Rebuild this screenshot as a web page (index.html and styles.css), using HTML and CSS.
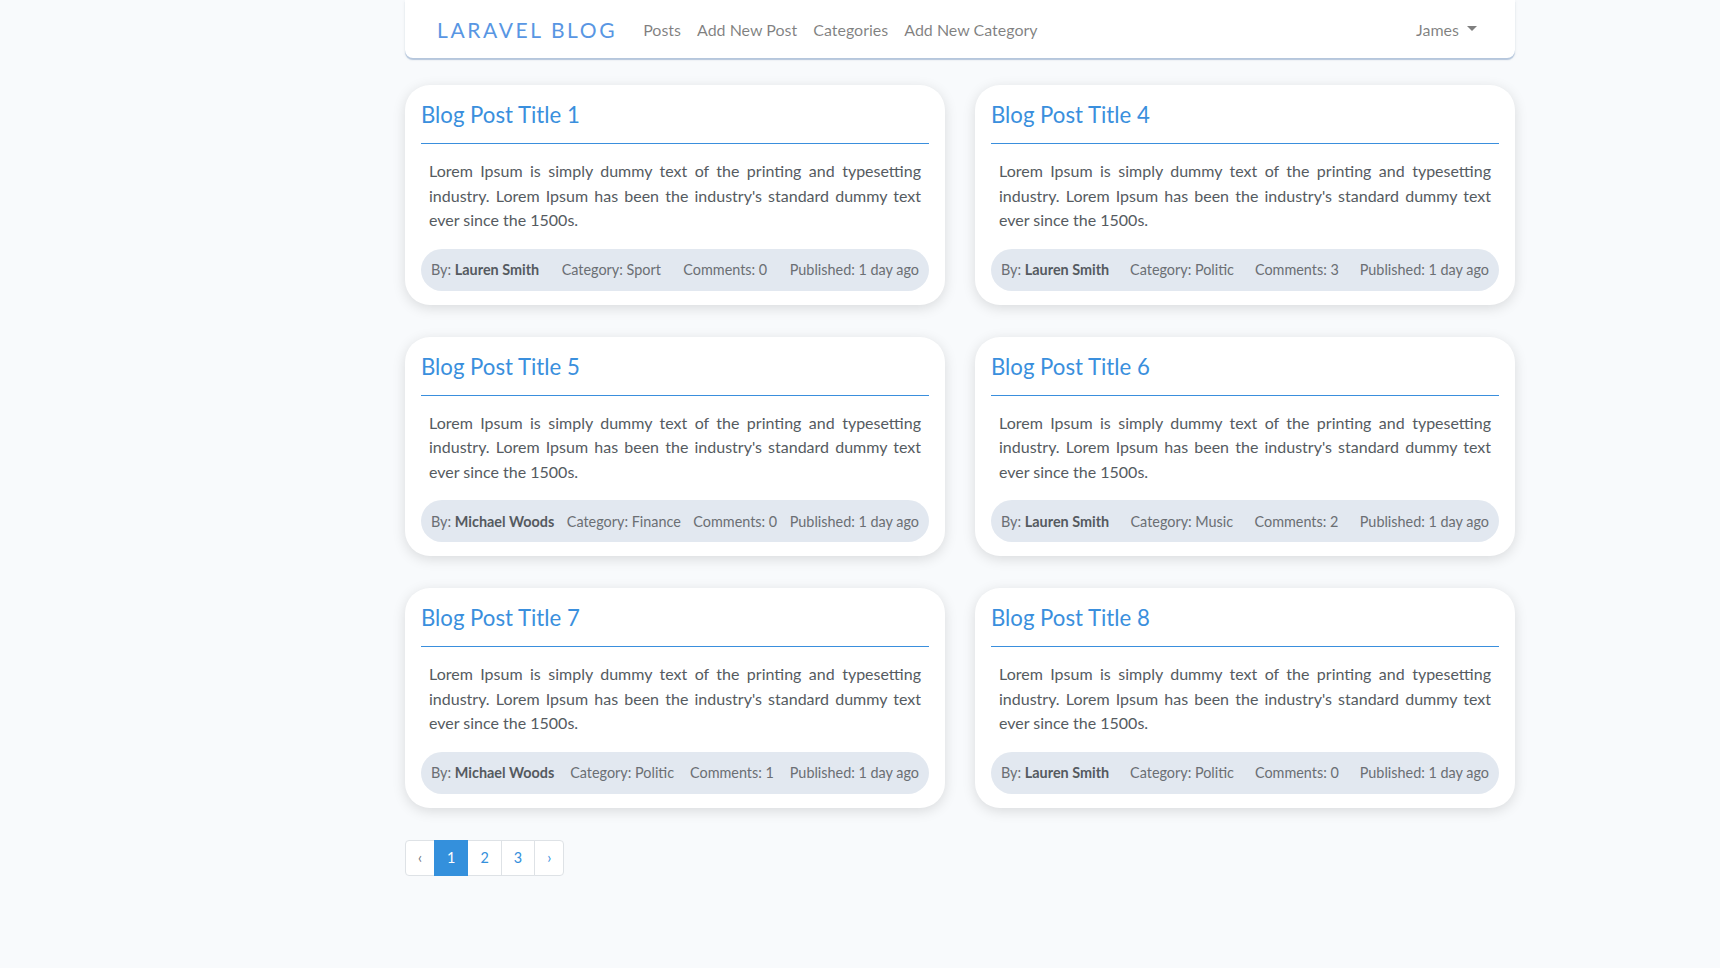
FILE: index.html
```html
<!DOCTYPE html>
<html lang="en">
<head>
<meta charset="utf-8">
<title>Laravel Blog</title>
<link rel="stylesheet" href="styles.css">
</head>
<body>
<div class="container">
  <nav class="navbar">
    <a class="brand" href="#">LARAVEL BLOG</a>
    <ul class="nav">
      <li><a class="nav-link" href="#">Posts</a></li>
      <li><a class="nav-link" href="#">Add New Post</a></li>
      <li><a class="nav-link" href="#">Categories</a></li>
      <li><a class="nav-link" href="#">Add New Category</a></li>
    </ul>
    <div class="nav-right">
      <a class="nav-link dropdown" href="#">James<span class="caret"></span></a>
    </div>
  </nav>

  <main class="posts">
    <article class="card">
      <h3 class="card-title">Blog Post Title 1</h3>
      <hr class="rule">
      <p class="excerpt">Lorem Ipsum is simply dummy text of the printing and typesetting industry. Lorem Ipsum has been the industry's standard dummy text ever since the 1500s.</p>
      <div class="meta">
        <span>By: <b>Lauren Smith</b></span>
        <span>Category: Sport</span>
        <span>Comments: 0</span>
        <span>Published: 1 day ago</span>
      </div>
    </article>
    <article class="card">
      <h3 class="card-title">Blog Post Title 4</h3>
      <hr class="rule">
      <p class="excerpt">Lorem Ipsum is simply dummy text of the printing and typesetting industry. Lorem Ipsum has been the industry's standard dummy text ever since the 1500s.</p>
      <div class="meta">
        <span>By: <b>Lauren Smith</b></span>
        <span>Category: Politic</span>
        <span>Comments: 3</span>
        <span>Published: 1 day ago</span>
      </div>
    </article>
    <article class="card">
      <h3 class="card-title">Blog Post Title 5</h3>
      <hr class="rule">
      <p class="excerpt">Lorem Ipsum is simply dummy text of the printing and typesetting industry. Lorem Ipsum has been the industry's standard dummy text ever since the 1500s.</p>
      <div class="meta">
        <span>By: <b>Michael Woods</b></span>
        <span>Category: Finance</span>
        <span>Comments: 0</span>
        <span>Published: 1 day ago</span>
      </div>
    </article>
    <article class="card">
      <h3 class="card-title">Blog Post Title 6</h3>
      <hr class="rule">
      <p class="excerpt">Lorem Ipsum is simply dummy text of the printing and typesetting industry. Lorem Ipsum has been the industry's standard dummy text ever since the 1500s.</p>
      <div class="meta">
        <span>By: <b>Lauren Smith</b></span>
        <span>Category: Music</span>
        <span>Comments: 2</span>
        <span>Published: 1 day ago</span>
      </div>
    </article>
    <article class="card">
      <h3 class="card-title">Blog Post Title 7</h3>
      <hr class="rule">
      <p class="excerpt">Lorem Ipsum is simply dummy text of the printing and typesetting industry. Lorem Ipsum has been the industry's standard dummy text ever since the 1500s.</p>
      <div class="meta">
        <span>By: <b>Michael Woods</b></span>
        <span>Category: Politic</span>
        <span>Comments: 1</span>
        <span>Published: 1 day ago</span>
      </div>
    </article>
    <article class="card">
      <h3 class="card-title">Blog Post Title 8</h3>
      <hr class="rule">
      <p class="excerpt">Lorem Ipsum is simply dummy text of the printing and typesetting industry. Lorem Ipsum has been the industry's standard dummy text ever since the 1500s.</p>
      <div class="meta">
        <span>By: <b>Lauren Smith</b></span>
        <span>Category: Politic</span>
        <span>Comments: 0</span>
        <span>Published: 1 day ago</span>
      </div>
    </article>
  </main>

  <ul class="pagination">
    <li class="page disabled"><span>&lsaquo;</span></li>
    <li class="page active"><span>1</span></li>
    <li class="page"><a href="#">2</a></li>
    <li class="page"><a href="#">3</a></li>
    <li class="page"><a href="#">&rsaquo;</a></li>
  </ul>
</div>
</body>
</html>
```

FILE: styles.css
```css
* { box-sizing: border-box; }

html, body {
  margin: 0;
  padding: 0;
}

body {
  background: #f8fafc;
  font-family: Lato, "Open Sans", "Liberation Sans", sans-serif;
  color: #212529;
  font-size: 14.4px;
}

a { text-decoration: none; }

.container {
  width: 1140px;
  margin-left: 390px;
  padding: 0 15px;
}

/* Navbar */
.navbar {
  display: flex;
  align-items: center;
  height: 58px;
  padding: 0 30px 0 32px;
  background: #fff;
  border-radius: 0 0 8px 8px;
  box-shadow: 0 2px 1px #b5c6dc, 0 1px 4px rgba(0, 0, 0, 0.06);
}

.brand {
  font-size: 21px;
  letter-spacing: 2.6px;
  color: #5896e3;
  margin-right: 18px;
}

.nav {
  display: flex;
  list-style: none;
  margin: 0;
  padding: 0;
}

.nav-link {
  display: block;
  padding: 8px 8px;
  font-size: 16px;
  color: rgba(0, 0, 0, 0.5);
}

.nav-right {
  margin-left: auto;
}

.dropdown {
  display: flex;
  align-items: center;
}

.caret {
  display: inline-block;
  margin-left: 8px;
  width: 0;
  height: 0;
  border-top: 5px solid rgba(0, 0, 0, 0.5);
  border-left: 5px solid transparent;
  border-right: 5px solid transparent;
  margin-top: -2px;
}

/* Posts grid */
.posts {
  display: grid;
  grid-template-columns: 540px 540px;
  column-gap: 30px;
  row-gap: 32px;
  margin-top: 27px;
}

.card {
  background: #fff;
  border-radius: 25px;
  padding: 16px 16px 14px;
  box-shadow: 0 3px 13px rgba(0, 0, 0, 0.13);
}

.card-title {
  margin: 0 0 14px;
  font-size: 22.2px;
  font-weight: 400;
  line-height: 28px;
  color: #3a8fdd;
}

.rule {
  margin: 0;
  border: 0;
  border-top: 1px solid #3a8fdd;
}

.excerpt {
  margin: 15px 0 16px;
  padding: 0 8px;
  font-size: 16px;
  line-height: 24.5px;
  color: #555b61;
  text-align: justify;
}

.meta {
  display: flex;
  justify-content: space-between;
  align-items: center;
  height: 42px;
  padding: 0 10px;
  background: #e2e8f0;
  border-radius: 21px;
  font-size: 14.4px;
  color: #6b6f74;
}

.meta b {
  color: #555a5f;
  font-weight: 700;
}

/* Pagination */
.pagination {
  display: flex;
  list-style: none;
  margin: 32px 0 0;
  padding: 0;
}

.page span,
.page a {
  display: block;
  padding: 8px 12px;
  font-size: 14.4px;
  line-height: 18px;
  color: #3490dc;
  background: #fff;
  border: 1px solid #dee2e6;
  margin-left: -1px;
}

.page:first-child span {
  margin-left: 0;
  border-radius: 4px 0 0 4px;
}

.page:last-child a {
  border-radius: 0 4px 4px 0;
}

.page.disabled span {
  color: #6c757d;
}

.page.active span {
  background: #3490dc;
  border-color: #3490dc;
  color: #fff;
  position: relative;
  z-index: 1;
}
```
